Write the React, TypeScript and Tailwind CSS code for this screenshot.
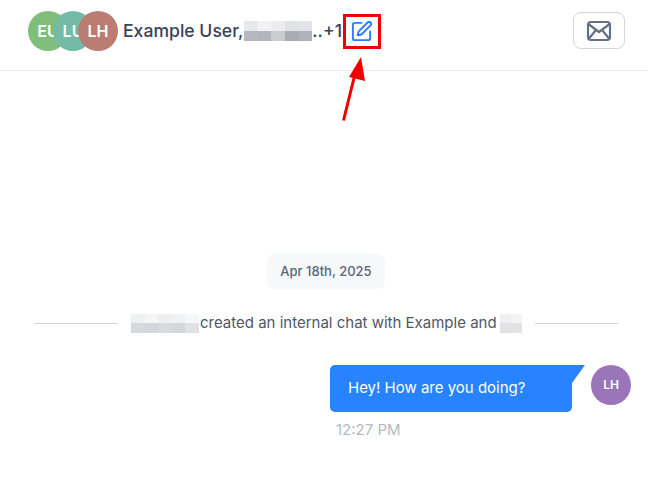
import React from 'react';
import { SquarePen } from 'lucide-react';

const Redacted = ({ rows, className }: { rows: string[][]; className: string }) => (
  <span className={`inline-flex flex-col shrink-0 ${className}`}>
    {rows.map((row, i) => (
      <span key={i} className="flex flex-1">
        {row.map((color, j) => (
          <span key={j} className="flex-1" style={{ backgroundColor: color }} />
        ))}
      </span>
    ))}
  </span>
);

const Avatar = ({ label, className }: { label: string; className: string }) => (
  <div className={`w-10 h-10 rounded-full flex items-center justify-center overflow-hidden shrink-0 text-white text-base font-semibold ${className}`}>
    {label}
  </div>
);

const App = () => {
  return (
    <div className="relative w-[648px] h-[489px] bg-white overflow-hidden font-['Inter',sans-serif]">
      {/* Header */}
      <header className="h-[71px] border-b border-[#ebecf1] flex items-center pl-7 pr-[23px] pb-[8px]">
        <div className="flex items-center">
          <Avatar label="EU" className="bg-[#7fbf7b]" />
          <Avatar label="LU" className="bg-[#74bba6] -ml-[15px]" />
          <Avatar label="LH" className="bg-[#bb7c72] -ml-[15px]" />
        </div>
        <div className="ml-[5px] flex items-center text-[17.6px] font-medium text-[#3b4358]">
          <span>Example User,</span>
          <Redacted
            className="w-[68px] h-5 ml-[1px]"
            rows={[
              ['#e7e8eb', '#f2f2f4', '#ececee', '#e0e2e6', '#e3e4e8'],
              ['#b5b8c0', '#b2b5bd', '#cbcccf', '#a9acb5', '#b0b3bb'],
            ]}
          />
          <span>..+1</span>
        </div>
        <button className="ml-[1px] w-[38px] h-[35px] border-[3px] border-[#f00000] flex items-center justify-center text-[#2f7bff]">
          <SquarePen size={23} strokeWidth={2} />
        </button>
        <button className="ml-auto -mt-px w-[52px] h-[37px] border border-[#d2d5e0] rounded-lg flex items-center justify-center">
          <svg width="26" height="22" viewBox="0 0 26 22" fill="none" stroke="#667085" strokeWidth="2.2" strokeLinejoin="round" strokeLinecap="round">
            <rect x="2" y="2" width="22" height="18" rx="3" />
            <path d="M3 4.5 L13 12 L23 4.5" />
            <path d="M3 18.5 L9.5 10.5" />
            <path d="M23 18.5 L16.5 10.5" />
          </svg>
        </button>
      </header>

      {/* Arrow pointing at the edit icon */}
      <svg className="absolute left-[335px] top-[50px]" width="40" height="75" viewBox="0 0 40 75">
        <line x1="8.5" y1="70.5" x2="20" y2="24" stroke="#f00000" strokeWidth="3" />
        <polygon points="26,7 14,27 30,31" fill="#f00000" />
      </svg>

      {/* Messages */}
      <main className="flex flex-col">
        <div className="mt-[183px] flex justify-center pl-[4px]">
          <div className="w-[118px] h-[35px] rounded-lg bg-[#f5f9fc] flex items-center justify-center text-[13px] font-medium text-[#5c6675]">
            Apr 18th, 2025
          </div>
        </div>

        <div className="mt-[24px] pl-[34px] pr-[30px] h-5 flex items-center text-[15px] text-[#4f5767]">
          <div className="w-[84px] h-px bg-[#d2d3d6]" />
          <div className="ml-[13px] flex items-center">
            <Redacted
              className="w-[68px] h-[19px]"
              rows={[
                ['#eff0f1', '#f6f6f7', '#eeeef0', '#f0f1f2', '#f6f7f8'],
                ['#d7d9dc', '#d3d6da', '#d9dadd', '#d3d6da', '#dfe1e4'],
              ]}
            />
            <span className="whitespace-nowrap ml-px">created an internal chat with Example and</span>
            <Redacted
              className="w-[22px] h-[19px] ml-[3px]"
              rows={[
                ['#f0f0f2', '#f5f5f6'],
                ['#e2e2e4', '#e2e3e5'],
              ]}
            />
          </div>
          <div className="ml-auto w-[83px] h-px bg-[#d2d3d6]" />
        </div>

        <div className="mt-[32px] flex justify-end pr-[17px]">
          <div className="relative w-[242px] h-[47px] mr-[19px] rounded-b-[5px] rounded-tl-[5px] bg-[#2783ff] flex items-center pl-[18px] text-[15px] font-normal text-white">
            Hey! How are you doing?
            <svg className="absolute left-full top-0" width="13" height="18" viewBox="0 0 13 18">
              <polygon points="0,0 13,0 0,18" fill="#2783ff" />
            </svg>
          </div>
          <div className="w-10 h-10 rounded-full bg-[#9a76b8] flex items-center justify-center text-xs font-semibold text-white">
            LH
          </div>
        </div>

        <div className="mt-[7px] ml-[336px] text-[15px] text-[#b4bac4]">12:27 PM</div>
      </main>
    </div>
  );
};

export default App;
